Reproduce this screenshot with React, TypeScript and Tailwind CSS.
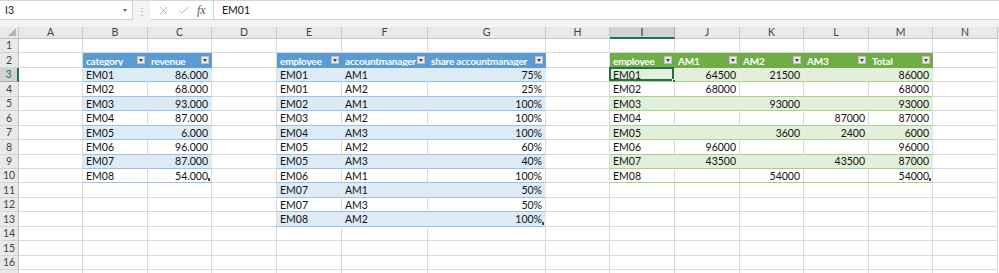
import { Check, X } from "lucide-react";

type Theme = "blue" | "green";
type Kind = "head" | "band" | "row";

interface Cell {
  t: string;
  right?: boolean;
  kind: Kind;
  theme: Theme;
  last?: boolean;
  end?: boolean;
}

const cols = [
  { n: "A", w: "w-[64px]" },
  { n: "B", w: "w-[65px]" },
  { n: "C", w: "w-[64px]" },
  { n: "D", w: "w-[65px]" },
  { n: "E", w: "w-[65px]" },
  { n: "F", w: "w-[86px]" },
  { n: "G", w: "w-[118px]" },
  { n: "H", w: "w-[64px]" },
  { n: "I", w: "w-[65px]" },
  { n: "J", w: "w-[65px]" },
  { n: "K", w: "w-[64px]" },
  { n: "L", w: "w-[65px]" },
  { n: "M", w: "w-[64px]" },
  { n: "N", w: "w-[65px]" },
];

const revenue = [
  ["EM01", "86.000"],
  ["EM02", "68.000"],
  ["EM03", "93.000"],
  ["EM04", "87.000"],
  ["EM05", "6.000"],
  ["EM06", "96.000"],
  ["EM07", "87.000"],
  ["EM08", "54.000"],
];

const shares = [
  ["EM01", "AM1", "75%"],
  ["EM01", "AM2", "25%"],
  ["EM02", "AM1", "100%"],
  ["EM03", "AM2", "100%"],
  ["EM04", "AM3", "100%"],
  ["EM05", "AM2", "60%"],
  ["EM05", "AM3", "40%"],
  ["EM06", "AM1", "100%"],
  ["EM07", "AM1", "50%"],
  ["EM07", "AM3", "50%"],
  ["EM08", "AM2", "100%"],
];

const pivot = [
  ["EM01", "64500", "21500", "", "86000"],
  ["EM02", "68000", "", "", "68000"],
  ["EM03", "", "93000", "", "93000"],
  ["EM04", "", "", "87000", "87000"],
  ["EM05", "", "3600", "2400", "6000"],
  ["EM06", "96000", "", "", "96000"],
  ["EM07", "43500", "", "43500", "87000"],
  ["EM08", "", "54000", "", "54000"],
];

const cells: Record<string, Cell> = {};

const addTable = (
  startRow: number,
  startCol: number,
  header: string[],
  rows: string[][],
  rightCols: number[],
  theme: Theme
) => {
  header.forEach((h, i) => {
    cells[`${startRow}-${startCol + i}`] = {
      t: h,
      kind: "head",
      theme,
      last: i === header.length - 1,
    };
  });
  rows.forEach((r, ri) => {
    r.forEach((v, ci) => {
      cells[`${startRow + 1 + ri}-${startCol + ci}`] = {
        t: v,
        right: rightCols.includes(ci),
        kind: ri % 2 === 0 ? "band" : "row",
        theme,
        last: ci === r.length - 1,
        end: ci === r.length - 1 && ri === rows.length - 1,
      };
    });
  });
};

addTable(2, 1, ["category", "revenue"], revenue, [1], "blue");
addTable(2, 4, ["employee", "accountmanager", "share accountmanager"], shares, [2], "blue");
addTable(2, 8, ["employee", "AM1", "AM2", "AM3", "Total"], pivot, [1, 2, 3, 4], "green");

const style = {
  blue: {
    head: "bg-[#5b9bd5] border-r-[#5b9bd5] border-b-[#5b9bd5] text-white font-bold",
    band: "bg-[#ddebf7] border-r-[#ddebf7] border-b-[#9bc2e6] text-[#111]",
    row: "bg-white border-r-[#dadada] border-b-[#9bc2e6] text-[#111]",
    lastBorder: "border-r-[#b9d3ec]",
    mark: "bg-[#1f4e79]",
  },
  green: {
    head: "bg-[#70ad47] border-r-[#70ad47] border-b-[#70ad47] text-white font-bold",
    band: "bg-[#e2efda] border-r-[#e2efda] border-b-[#a9d08e] text-[#111]",
    row: "bg-white border-r-[#dadada] border-b-[#a9d08e] text-[#111]",
    lastBorder: "border-r-[#c6e0b4]",
    mark: "bg-[#375623]",
  },
};

const FilterButton = () => (
  <span className="absolute right-[2px] top-1/2 -translate-y-1/2 w-[8px] h-[8px] bg-[#e8e8e8] border border-[#bfbfbf] flex items-center justify-center">
    <span className="w-0 h-0 border-l-[2.5px] border-r-[2.5px] border-t-[3px] border-l-transparent border-r-transparent border-t-[#404040]" />
  </span>
);

const GridCell = ({ row, col, w }: { row: number; col: number; w: string }) => {
  const cell = cells[`${row}-${col}`];
  const selected = row === 3 && col === 8;
  const base = `relative shrink-0 h-full border-r border-b ${w} flex items-end pb-[1px] px-[3px] overflow-visible whitespace-nowrap`;
  if (!cell) {
    return <div className={`${base} border-[#dadada] bg-white`} />;
  }
  const s = style[cell.theme];
  return (
    <div
      className={`${base} ${s[cell.kind]} ${cell.last && cell.kind !== "head" ? s.lastBorder : ""} ${cell.right ? "justify-end" : "justify-start"}`}
    >
      <span
        className={
          cell.kind === "head" ? "pr-[8px] overflow-hidden text-[10px] tracking-[-0.2px]" : ""
        }
      >
        {cell.t}
      </span>
      {cell.kind === "head" && <FilterButton />}
      {cell.end && (
        <span className={`absolute right-[1px] bottom-[1px] w-[2px] h-[3px] ${s.mark}`} />
      )}
      {selected && (
        <>
          <span className="absolute -left-[1px] -top-[1px] right-0 bottom-0 border-2 border-[#217346] pointer-events-none" />
          <span className="absolute -right-[3px] -bottom-[3px] w-[5px] h-[5px] bg-[#217346] border border-white" />
        </>
      )}
    </div>
  );
};

const rowNums = Array.from({ length: 17 }, (_, i) => i + 1);

export default function App() {
  return (
    <div
      className="w-[999px] h-[273px] overflow-hidden bg-white text-[10.5px] leading-none select-none"
      style={{ fontFamily: "Lato, 'Noto Sans', sans-serif" }}
    >
      {/* formula bar */}
      <div className="h-[20px] flex bg-[#f3f3f3] border-t border-[#d6d6d6]">
        <div className="w-[133px] bg-white border-r border-b border-[#d4d4d4] flex items-center justify-between px-[5px] text-[#222]">
          <span>I3</span>
          <span className="w-0 h-0 border-l-[2.5px] border-r-[2.5px] border-t-[3px] border-l-transparent border-r-transparent border-t-[#666]" />
        </div>
        <div className="w-[17px] flex items-center justify-center text-[#999] text-[10px]">⋮</div>
        <div className="w-[63px] bg-white border-b border-[#d4d4d4] flex items-center justify-around px-[4px]">
          <X size={13} strokeWidth={1.3} className="text-[#9a9a9a]" />
          <Check size={13} strokeWidth={1.5} className="text-[#a8a8a8]" />
          <span
            className="italic text-[12px] text-[#555]"
            style={{ fontFamily: "'Liberation Serif', serif" }}
          >
            fx
          </span>
        </div>
        <div className="flex-1 bg-white border-l border-b border-[#d4d4d4] flex items-center pl-[8px] text-[#111]">
          EM01
        </div>
      </div>
      <div className="h-[7px] bg-[#f3f3f3]" />

      {/* column headers */}
      <div className="h-[12px] flex bg-[#e9e9e9] text-[#444]">
        <div className="relative w-[19px] shrink-0 border-r border-b border-[#c6c6c6]">
          <span className="absolute right-[2px] bottom-[2px] w-0 h-0 border-b-[8px] border-l-[8px] border-b-[#b5b5b5] border-l-transparent" />
        </div>
        {cols.map((c) => (
          <div
            key={c.n}
            className={`${c.w} shrink-0 flex items-center justify-center border-r ${
              c.n === "I"
                ? "bg-[#d2d2d2] border-r-[#ababab] border-b-2 border-b-[#217346] text-[#1e1e1e]"
                : "border-r-[#c6c6c6] border-b border-b-[#c6c6c6]"
            }`}
          >
            {c.n}
          </div>
        ))}
      </div>

      {/* rows */}
      {rowNums.map((r) => (
        <div key={r} className="h-[14.45px] flex">
          <div
            className={`w-[19px] shrink-0 flex items-center justify-center border-b ${
              r === 3
                ? "bg-[#d2d2d2] border-r-2 border-r-[#217346] border-b-[#ababab] text-[#217346]"
                : "bg-[#e9e9e9] border-r border-r-[#c6c6c6] border-b-[#d4d4d4] text-[#444]"
            }`}
          >
            {r < 17 ? r : ""}
          </div>
          {cols.map((c, ci) => (
            <GridCell key={c.n} row={r} col={ci} w={c.w} />
          ))}
        </div>
      ))}
    </div>
  );
}
